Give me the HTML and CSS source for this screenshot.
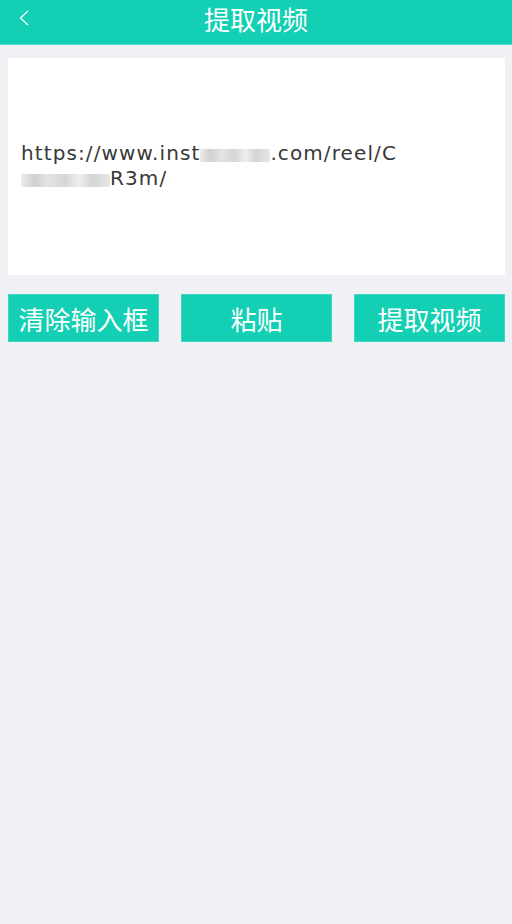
FILE: index.html
```html
<!DOCTYPE html>
<html lang="zh">
<head>
<meta charset="utf-8">
<link rel="stylesheet" href="styles.css">
</head>
<body>
<header class="topbar">
  <span class="back">
    <svg width="12" height="16" viewBox="0 0 12 16"><path d="M10 1 L2.5 8 L10 15" fill="none" stroke="#fff" stroke-width="1.3"/></svg>
  </span>
  <h1 class="title">提取视频</h1>
</header>
<main class="content">
  <div class="input-box">
    <p class="url">https://www.inst<span class="blur b1"></span>.com/reel/C<br><span class="blur b2"></span>R3m/</p>
  </div>
  <div class="actions">
    <button class="btn">清除输入框</button>
    <button class="btn">粘贴</button>
    <button class="btn">提取视频</button>
  </div>
</main>
</body>
</html>
```
FILE: styles.css
```css
html, body {
  margin: 0;
  padding: 0;
  background: #f0f1f5;
  height: 100%;
  font-family: "Noto Sans CJK SC", "Noto Sans", sans-serif;
}
.topbar {
  height: 45px;
  background: #13cfb3;
  border-bottom: 1px solid #4ddbc6;
  box-sizing: border-box;
  display: flex;
  align-items: center;
  justify-content: center;
  position: relative;
}
.back {
  position: absolute;
  left: 18px;
  top: 10px;
  display: flex;
}
.title {
  margin: 0;
  color: #fff;
  font-weight: normal;
  font-size: 26px;
  line-height: 1;
  margin-top: -6px;
}
.content {
  padding: 13px 7px 0 8px;
}
.input-box {
  background: #fff;
  height: 217px;
  box-sizing: border-box;
  padding: 83px 14px 0 13px;
}
.url {
  margin: 0;
  font-family: "DejaVu Sans", "Noto Sans", sans-serif;
  font-size: 20px;
  line-height: 25px;
  color: #383838;
  letter-spacing: 1.1px;
}
.blur {
  display: inline-block;
  height: 13px;
  vertical-align: -2px;
  background: linear-gradient(90deg, #ececec 0%, #d0d0d0 15%, #e4e4e4 30%, #d6d6d6 50%, #eeeeee 65%, #d4d4d4 80%, #e8e8e8 100%);
}
.b1 { width: 70px; }
.b2 { width: 89px; }
.actions {
  display: flex;
  justify-content: space-between;
  margin-top: 19px;
}
.btn {
  width: 151px;
  height: 48px;
  background: #13cfb3;
  border: 1px solid #3fd8c0;
  color: #fff;
  font-family: "Noto Sans CJK SC", sans-serif;
  font-size: 26px;
  padding: 0;
  display: flex;
  align-items: center;
  justify-content: center;
}
```
